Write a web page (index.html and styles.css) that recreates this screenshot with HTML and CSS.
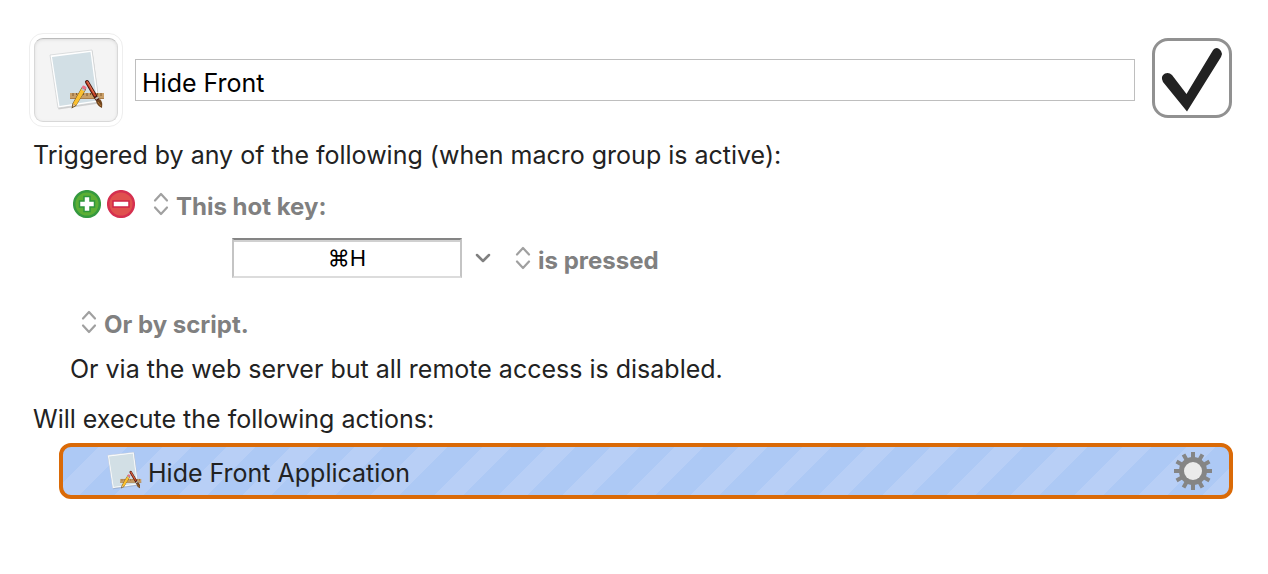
FILE: index.html
```html
<!DOCTYPE html>
<html lang="en">
<head>
    <meta charset="UTF-8">
    <meta name="viewport" content="width=device-width, initial-scale=1.0">
    <title>Hide Front</title>
    <link rel="stylesheet" href="styles.css">
</head>
<body>
    <svg class="sprites" aria-hidden="true">
        <symbol id="app-icon" viewBox="0 0 66 72">
            <path d="M6.5 11.5 L48.5 6 L55.5 58.5 L14.5 64.5 Z" fill="#000" opacity=".15"/>
            <path d="M6 10 L48 5 L55 57 L14 63 Z" fill="#fff" stroke="#c6c9cb" stroke-width=".6"/>
            <path d="M8 12 L46.5 7 L53 55.500 L15.500 61 Z" fill="#d2dfe5"/>
            <path d="M26 48 H60 V54 H26 Z" fill="#c99f68"/>
            <path d="M26 53.500 H60" stroke="#a87c48" stroke-width="1"/>
            <path d="M29 48 V51 M32.500 48 V50 M36 48 V51 M39.500 48 V50 M43 48 V51 M46.500 48 V50 M50 48 V51 M53.500 48 V50 M57 48 V51" stroke="#76522b" stroke-width=".9"/>
            <path d="M27.500 63.500 L28.500 58.500 L38 42 L42 44.500 L32 61 Z" fill="#5e4518"/>
            <path d="M29 58.500 L37.500 43.500 L41 45.500 L32 60.500 Z" fill="#fbc02f"/>
            <path d="M28.500 62 L29.500 58.500 L31.500 60.500 Z" fill="#edc997"/>
            <path d="M38 43.500 L40.500 45.500" stroke="#b9bfc8" stroke-width="2"/>
            <path d="M39.500 42 L41 43" stroke="#ef7186" stroke-width="3" stroke-linecap="round"/>
            <path d="M43 37 L53 54" stroke="#4a1a10" stroke-width="4" stroke-linecap="round"/>
            <path d="M43 37 L51 50.500" stroke="#cb4528" stroke-width="2" stroke-linecap="round"/>
            <path d="M43.500 36.500 L50 48" stroke="#ef9471" stroke-width=".7"/>
            <path d="M51.500 54 L54.500 52" stroke="#c5c5bd" stroke-width="2"/>
            <path d="M52 56 L56 54 Q59 57 58 63 Q53 61 52 56 Z" fill="#70451d"/>
            <path d="M54 57 L57 61" stroke="#b77a38" stroke-width="1"/>
        </symbol>
        <symbol id="updown" viewBox="0 0 16 24">
            <path d="M2 8.500 L8 2 L14 8.500 M2 15.500 L8 22 L14 15.500" fill="none" stroke="#a0a0a0" stroke-width="2.200" stroke-linecap="round" stroke-linejoin="round"/>
        </symbol>
    </svg>

    <main class="macro">
        <header class="macro-header">
            <button class="icon-well" type="button" aria-label="Macro icon">
                <svg class="icon-large"><use href="#app-icon"/></svg>
            </button>
            <input class="macro-name" type="text" value="Hide Front" aria-label="Macro name">
            <label class="enabled">
                <input type="checkbox" checked aria-label="Macro enabled">
                <svg class="tick" viewBox="0 0 80 80">
                    <path d="M65 10 Q69 11 70 16 L69 19 L35 73.500 L11 44 Q8 38 13 35.500 Q17 34 20 37 L34.500 56 L60.500 13 Q62 10 65 10 Z" fill="#222"/>
                </svg>
            </label>
        </header>

        <p class="caption">Triggered by any of the following (when macro group is active):</p>
        <section class="triggers">
            <div class="trigger">
                <button class="round" type="button" aria-label="Add trigger">
                    <svg viewBox="0 0 28 28">
                        <circle cx="14" cy="14" r="12.800" fill="#5caf35" stroke="#35993f" stroke-width="2.500"/>
                        <path d="M11 6.500 H17 V11 H21.500 V17 H17 V21.500 H11 V17 H6.500 V11 H11 Z" fill="#fff" stroke="#2e963c" stroke-width="1.500"/>
                    </svg>
                </button>
                <button class="round" type="button" aria-label="Remove trigger">
                    <svg viewBox="0 0 28 28">
                        <circle cx="14" cy="14" r="12.800" fill="#e0514e" stroke="#d5304f" stroke-width="2.500"/>
                        <path d="M6 11 H22 V17 H6 Z" fill="#fff" stroke="#cf2548" stroke-width="1.500"/>
                    </svg>
                </button>
                <label class="popup">
                    <svg class="updown"><use href="#updown"/></svg>
                    <select aria-label="Trigger type"><option>This hot key:</option></select>
                </label>
            </div>
            <div class="hotkey">
                <input class="key" type="text" value="⌘H" aria-label="Hot key">
                <button class="menu" type="button" aria-label="Hot key options">
                    <svg viewBox="0 0 16 10">
                        <path d="M2 2 L8 8 L14 2" fill="none" stroke="#808080" stroke-width="2.500" stroke-linecap="round" stroke-linejoin="round"/>
                    </svg>
                </button>
                <label class="popup">
                    <svg class="updown"><use href="#updown"/></svg>
                    <select aria-label="Key event"><option>is pressed</option></select>
                </label>
            </div>
            <div class="script">
                <label class="popup">
                    <svg class="updown"><use href="#updown"/></svg>
                    <select aria-label="Script type"><option>Or by script.</option></select>
                </label>
            </div>
            <p class="remote">Or via the web server but all remote access is disabled.</p>
        </section>

        <p class="caption">Will execute the following actions:</p>
        <section class="action">
            <svg class="icon-small"><use href="#app-icon"/></svg>
            <span class="action-name">Hide Front Application</span>
            <button class="gear" type="button" aria-label="Action menu">
                <svg viewBox="-19 -19 38 38">
                    <g stroke="#858585" stroke-width="4">
                        <path d="M0 -19 V19 M-19 0 H19"/>
                        <path d="M0 -19 V19 M-19 0 H19" transform="rotate(30)"/>
                        <path d="M0 -19 V19 M-19 0 H19" transform="rotate(60)"/>
                    </g>
                    <circle r="14" fill="#858585"/>
                    <circle r="9" fill="#ebebeb"/>
                </svg>
            </button>
        </section>
    </main>
</body>
</html>
```

FILE: styles.css
```css
* {
    box-sizing: border-box;
}
body {
    margin: 0;
    background: #fff;
    color: #222;
    font-family: Inter, "Noto Sans", sans-serif;
    font-size: 25px;
    line-height: 30px;
}
p {
    margin: 0;
}
svg {
    display: block;
}
button,
input,
select {
    margin: 0;
    padding: 0;
    border: none;
    background: none;
    color: inherit;
    font: inherit;
}
.sprites {
    position: absolute;
    width: 0;
    height: 0;
}
.macro {
    padding: 33px 35px 33px 29px;
}

/* Header */
.macro-header {
    display: flex;
    align-items: center;
    gap: 12px;
    margin-bottom: 13px;
    padding-right: 1px;
}
.icon-well {
    flex: none;
    width: 94px;
    height: 94px;
    padding: 4px;
    border: 1px solid #eee;
    border-radius: 14px;
}
.icon-large {
    width: 84px;
    height: 84px;
    padding: 6px 7px 4px 9px;
    border: 1px solid #d8d8d8;
    border-top-color: #bbb;
    border-radius: 9px;
    background: #f4f4f4;
    box-shadow: inset 0 1px 3px #ddd;
}
.macro-name {
    flex: 1;
    min-width: 0;
    height: 42px;
    padding: 5px 6px 0;
    border: 1px solid #bebebe;
    color: #000;
}
.enabled {
    position: relative;
    flex: none;
    align-self: flex-start;
    margin: 5px 0 0 5px;
}
.enabled input {
    display: block;
    appearance: none;
    width: 80px;
    height: 80px;
    border: 3px solid #919191;
    border-radius: 16px;
}
.tick {
    position: absolute;
    inset: 0;
    pointer-events: none;
}
.enabled input:not(:checked) + .tick {
    display: none;
}
.caption {
    padding-left: 4px;
}

/* Triggers */
.triggers {
    padding: 18px 0 20px 41px;
}
.trigger,
.hotkey,
.popup {
    display: flex;
    align-items: center;
}
.trigger {
    gap: 6px;
    padding-left: 3px;
}
.round {
    width: 28px;
    height: 28px;
}
.popup {
    gap: 7px;
    color: #808080;
    font-size: 24px;
    font-weight: 700;
}
.trigger .popup {
    margin-left: 12px;
}
.updown {
    width: 16px;
    height: 24px;
}
.popup select {
    appearance: none;
    height: 32px;
    padding-top: 4px;
}
.hotkey {
    gap: 13px;
    padding: 18px 0 0 162px;
}
.key {
    width: 230px;
    height: 40px;
    border: 2px solid #c4c4c4;
    border-top-color: #848484;
    border-bottom-color: #dcdcdc;
    box-shadow: inset 0 2px #d0d0d0;
    color: #000;
    font-size: 22px;
    text-align: center;
}
.menu {
    width: 16px;
}
.hotkey .popup {
    margin-left: 11px;
}
.script {
    padding: 28px 0 16px 11px;
}

/* Actions */
.action {
    display: flex;
    align-items: center;
    height: 56px;
    margin: 9px 0 0 30px;
    padding: 0 17px 0 41px;
    border: 4px solid #da6a07;
    border-radius: 12px;
    background: linear-gradient(135deg, #b8cff6 0 23%, #adc9f5 23% 50%, #b8cff6 50% 73%, #adc9f5 73%) 35px 0 / 64px 64px;
}
.icon-small {
    width: 41px;
    height: 45px;
}
.action-name {
    flex: 1;
    padding: 4px 0 0 3px;
}
.gear {
    width: 38px;
    height: 38px;
}
```
